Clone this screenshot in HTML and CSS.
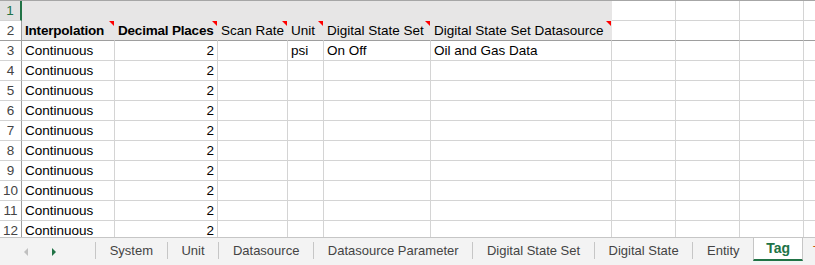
FILE: index.html
```html
<!DOCTYPE html>
<html lang="en">

<head>
  <meta charset="UTF-8">
  <title>Tag</title>
  <link rel="stylesheet" href="styles.css">
</head>

<body>
  <div class="sheet">
    <table class="grid">
      <colgroup>
        <col class="c-hdr">
        <col class="c-a">
        <col class="c-b">
        <col class="c-c">
        <col class="c-d">
        <col class="c-e">
        <col class="c-f">
        <col class="c-x">
        <col class="c-x">
        <col class="c-x">
        <col class="c-x">
      </colgroup>
      <tr class="band">
        <th class="rn active">1</th>
        <td class="fill"></td><td class="fill"></td><td class="fill"></td>
        <td class="fill"></td><td class="fill"></td><td class="fill"></td>
        <td></td><td></td><td></td><td></td>
      </tr>
      <tr class="band heads">
        <th class="rn">2</th>
        <td class="fill note bold">Interpolation</td>
        <td class="fill note bold">Decimal Places</td>
        <td class="fill note">Scan Rate</td>
        <td class="fill note">Unit</td>
        <td class="fill note">Digital State Set</td>
        <td class="fill note">Digital State Set Datasource</td>
        <td></td><td></td><td></td><td></td>
      </tr>
      <tr>
        <th class="rn">3</th>
        <td>Continuous</td><td class="num">2</td><td></td><td>psi</td>
        <td>On Off</td><td>Oil and Gas Data</td>
        <td></td><td></td><td></td><td></td>
      </tr>
      <tr><th class="rn">4</th><td>Continuous</td><td class="num">2</td><td></td><td></td><td></td><td></td><td></td><td></td><td></td><td></td></tr>
      <tr><th class="rn">5</th><td>Continuous</td><td class="num">2</td><td></td><td></td><td></td><td></td><td></td><td></td><td></td><td></td></tr>
      <tr><th class="rn">6</th><td>Continuous</td><td class="num">2</td><td></td><td></td><td></td><td></td><td></td><td></td><td></td><td></td></tr>
      <tr><th class="rn">7</th><td>Continuous</td><td class="num">2</td><td></td><td></td><td></td><td></td><td></td><td></td><td></td><td></td></tr>
      <tr><th class="rn">8</th><td>Continuous</td><td class="num">2</td><td></td><td></td><td></td><td></td><td></td><td></td><td></td><td></td></tr>
      <tr><th class="rn">9</th><td>Continuous</td><td class="num">2</td><td></td><td></td><td></td><td></td><td></td><td></td><td></td><td></td></tr>
      <tr><th class="rn">10</th><td>Continuous</td><td class="num">2</td><td></td><td></td><td></td><td></td><td></td><td></td><td></td><td></td></tr>
      <tr><th class="rn">11</th><td>Continuous</td><td class="num">2</td><td></td><td></td><td></td><td></td><td></td><td></td><td></td><td></td></tr>
      <tr><th class="rn">12</th><td>Continuous</td><td class="num">2</td><td></td><td></td><td></td><td></td><td></td><td></td><td></td><td></td></tr>
    </table>
  </div>

  <div class="tab-bar">
    <div class="nav">
      <span class="arrow prev"></span>
      <span class="arrow next"></span>
    </div>
    <div class="tab">System</div>
    <div class="tab">Unit</div>
    <div class="tab">Datasource</div>
    <div class="tab">Datasource Parameter</div>
    <div class="tab">Digital State Set</div>
    <div class="tab">Digital State</div>
    <div class="tab">Entity</div>
    <div class="tab current">Tag</div>
    <div class="tab more">Tag Attribute</div>
  </div>
</body>

</html>
```

FILE: styles.css
```css
body {
  margin: 0;
  width: 815px;
  height: 265px;
  overflow: hidden;
  background: #fff;
  font-family: 'Liberation Sans', Arial, sans-serif;
}

.sheet {
  height: 237px;
  overflow: hidden;
}

.grid {
  table-layout: fixed;
  width: 860px;
  border-collapse: separate;
  border-spacing: 0;
  border-top: 1px solid #a6a6a6;
  font-size: 13.5px;
  color: #000;
}

.c-hdr { width: 22px; }
.c-a { width: 93px; }
.c-b { width: 103px; }
.c-c { width: 70px; }
.c-d { width: 36px; }
.c-e { width: 107px; }
.c-f { width: 181px; }
.c-x { width: 64px; }

.grid tr {
  height: 20px;
}

.grid td,
.grid th {
  padding: 0 3px;
  border-right: 1px solid #d4d4d4;
  border-bottom: 1px solid #d4d4d4;
  white-space: nowrap;
  overflow: hidden;
  vertical-align: bottom;
  line-height: 18px;
  text-align: left;
}

.grid th.rn {
  padding: 0;
  text-align: center;
  font-weight: normal;
  color: #444;
  border-right-color: #9e9e9e;
}

.grid th.rn.active {
  background: #e1e1e1;
  color: #217346;
  border-right: 2px solid #217346;
}

.grid td.fill {
  background: #e7e6e6;
  border-right-color: #e7e6e6;
}

.band:first-child td.fill {
  border-bottom-color: #e7e6e6;
}

.heads td,
.heads th {
  border-bottom-color: #9e9e9e;
}

.grid td.bold {
  font-weight: bold;
  letter-spacing: -0.2px;
}

.grid td.num {
  text-align: right;
}

.grid td.note {
  position: relative;
  overflow: visible;
}

.grid td.note::after {
  content: '';
  position: absolute;
  top: 0;
  right: 0;
  border-top: 5px solid #ff0000;
  border-left: 5px solid transparent;
}

.tab-bar {
  display: flex;
  height: 28px;
  box-sizing: border-box;
  border-top: 1px solid #c6c6c6;
  background: #f3f3f3;
  font-size: 13px;
  color: #444;
  overflow: hidden;
  white-space: nowrap;
}

.nav {
  width: 95px;
  flex: none;
  display: flex;
  align-items: center;
  gap: 24px;
  padding-left: 24px;
  box-sizing: border-box;
}

.arrow {
  width: 0;
  height: 0;
  border-top: 4px solid transparent;
  border-bottom: 4px solid transparent;
}

.arrow.prev {
  border-right: 4px solid #c0c0c0;
}

.arrow.next {
  border-left: 4px solid #217346;
}

.tab {
  flex: none;
  height: 17px;
  margin-top: 4px;
  padding: 0 13.7px;
  border-left: 1px solid #c6c6c6;
  display: flex;
  align-items: center;
}

.tab.current {
  height: 22px;
  margin-top: -1px;
  padding: 0 12px;
  background: #fff;
  border-left: 1px solid #c6c6c6;
  border-right: 1px solid #c6c6c6;
  border-bottom: 2px solid #217346;
  color: #217346;
  font-weight: bold;
  font-size: 14px;
}

.tab.more {
  border-left: none;
  padding-left: 10px;
  color: #c65911;
}
```
